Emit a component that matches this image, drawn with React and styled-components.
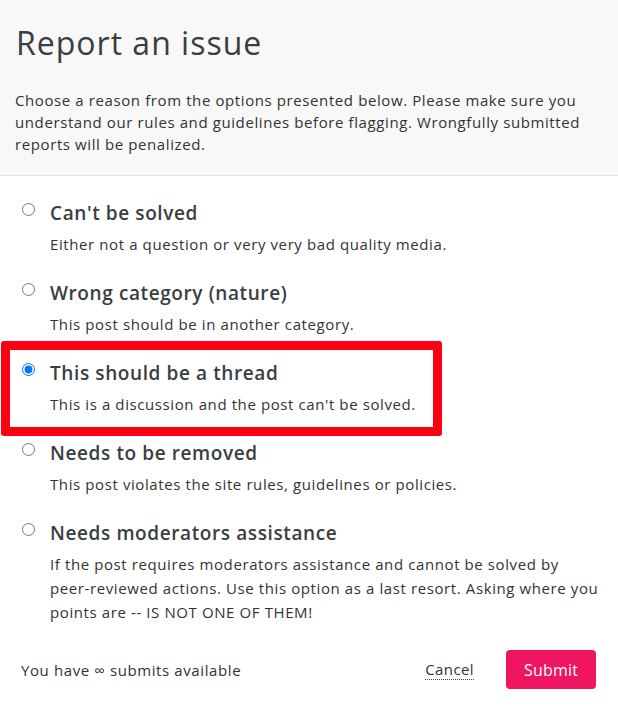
import React from 'react';
import styled, { createGlobalStyle } from 'styled-components';

const Global = createGlobalStyle`
  body {
    margin: 0;
    background: #fff;
    font-family: "Open Sans", "Noto Sans", sans-serif;
    color: #333;
  }
`;

const Page = styled.div`
  width: 618px;
  min-height: 710px;
  background: #fff;
`;

const Header = styled.div`
  background: #f8f8f8;
  border-bottom: 1px solid #e6e6e6;
  padding: 21px 16px 20px 15px;
`;

const Title = styled.h1`
  margin: 0 0 24px 1px;
  font-size: 32px;
  line-height: 44px;
  font-weight: 400;
  letter-spacing: 1px;
  color: #3a3d42;
`;

const Intro = styled.p`
  margin: 0;
  font-size: 15px;
  line-height: 22px;
  letter-spacing: 0.6px;
  color: #333;
`;

const Options = styled.div`
  display: flex;
  flex-direction: column;
  gap: 24px;
  padding-top: 24px;
`;

const Option = styled.label`
  position: relative;
  display: flex;
  align-items: flex-start;
  gap: 15px;
  padding: 0 14px 0 22px;
  cursor: pointer;
`;

const Radio = styled.input`
  flex: none;
  width: 13px;
  height: 13px;
  margin: 3px 0 0 0;
`;

const Body = styled.div`
  display: flex;
  flex-direction: column;
  gap: 6px;
`;

const OptionTitle = styled.div`
  font-size: 19px;
  line-height: 26px;
  font-weight: 600;
  letter-spacing: 0.6px;
  color: #3a3d42;
`;

const OptionText = styled.div`
  font-size: 15px;
  line-height: 24px;
  letter-spacing: 0.6px;
  color: #333;
`;

const NoWrap = styled.span`
  white-space: nowrap;
`;

const Highlight = styled.div`
  position: absolute;
  left: 1px;
  top: -19px;
  width: 441px;
  height: 95px;
  box-sizing: border-box;
  border: 9.5px solid #ff0013;
  border-radius: 3px;
  pointer-events: none;
`;

const Footer = styled.div`
  display: flex;
  align-items: center;
  margin-top: 26px;
  padding: 0 22px 0 21px;
`;

const Quota = styled.span`
  flex: 1;
  font-size: 15px;
  line-height: 22px;
  letter-spacing: 0.6px;
  color: #333;
`;

const CancelLink = styled.a`
  font-size: 15px;
  line-height: 20px;
  letter-spacing: 0.4px;
  color: #333;
  text-decoration: none;
  border-bottom: 1px dotted #444;
  margin-right: 32px;
  cursor: pointer;
`;

const SubmitButton = styled.button`
  height: 39px;
  width: 90px;
  border: none;
  border-radius: 4px;
  background: #ef1560;
  color: #fff;
  font-family: inherit;
  font-size: 16px;
  letter-spacing: 0.2px;
  cursor: pointer;
`;

const reasons = [
  { title: "Can't be solved", text: 'Either not a question or very very bad quality media.' },
  { title: 'Wrong category (nature)', text: 'This post should be in another category.' },
  { title: 'This should be a thread', text: "This is a discussion and the post can't be solved.", marked: true },
  { title: 'Needs to be removed', text: 'This post violates the site rules, guidelines or policies.' },
  {
    title: 'Needs moderators assistance',
    text: (
      <>
        If the post requires moderators assistance and cannot be solved by <NoWrap>peer-reviewed</NoWrap> actions.
        Use this option as a last resort. Asking where you points are -- IS NOT ONE OF THEM!
      </>
    ),
  },
];

export default function App() {
  const [picked, setPicked] = React.useState(2);
  return (
    <Page>
      <Global />
      <Header>
        <Title>Report an issue</Title>
        <Intro>
          Choose a reason from the options presented below. Please make sure you understand our rules and
          guidelines before flagging. Wrongfully submitted reports will be penalized.
        </Intro>
      </Header>
      <Options>
        {reasons.map((r, i) => (
          <Option key={r.title}>
            <Radio type="radio" name="reason" checked={picked === i} onChange={() => setPicked(i)} />
            <Body>
              <OptionTitle>{r.title}</OptionTitle>
              <OptionText>{r.text}</OptionText>
            </Body>
            {r.marked && <Highlight />}
          </Option>
        ))}
      </Options>
      <Footer>
        <Quota>You have ∞ submits available</Quota>
        <CancelLink>Cancel</CancelLink>
        <SubmitButton>Submit</SubmitButton>
      </Footer>
    </Page>
  );
}
